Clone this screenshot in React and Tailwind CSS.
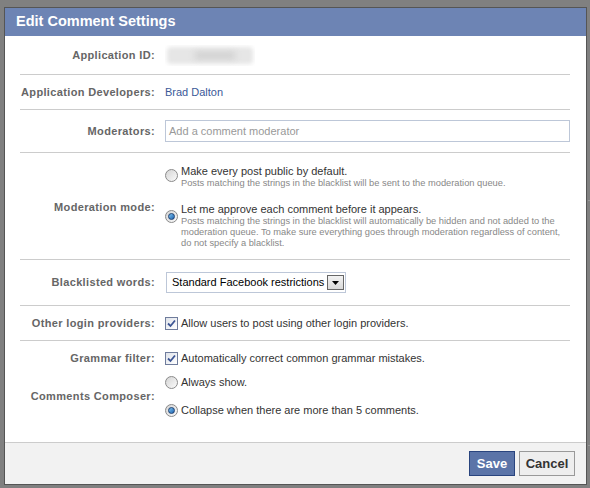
import React from "react";

const font = { fontFamily: '"Liberation Sans", Arial, sans-serif' };

function Radio({ checked }) {
  return (
    <span className="relative inline-flex h-[13px] w-[13px] shrink-0 items-center justify-center rounded-full border border-[#8a8a8a] bg-gradient-to-br from-[#d4d4d4] to-[#fbfbfb]">
      {checked && (
        <span className="h-[7px] w-[7px] rounded-full border border-[#1d3f70] bg-gradient-to-br from-[#7cc3f0] to-[#1d63b0]" />
      )}
    </span>
  );
}

function Checkbox() {
  return (
    <span className="inline-flex h-[13px] w-[13px] shrink-0 items-center justify-center border border-[#6f7c9c] bg-gradient-to-br from-[#dfe3ea] to-[#ffffff]">
      <svg width="9" height="9" viewBox="0 0 9 9">
        <path d="M1 4.5 L3.5 7 L8 1.5" fill="none" stroke="#3c5594" strokeWidth="1.8" />
      </svg>
    </span>
  );
}

function Label({ children, className = "" }) {
  return (
    <div className={"w-[135px] shrink-0 whitespace-nowrap text-right text-[11px] font-bold tracking-[0.35px] text-[#666] " + className}>
      {children}
    </div>
  );
}

function Sep() {
  return <div className="h-px bg-[#ccc]" />;
}

export default function App() {
  return (
    <div className="relative h-[488px] w-[590px] overflow-hidden bg-[#808080]" style={font}>
      <div className="absolute left-[588px] top-[200px] h-px w-[4px] bg-[#999]" />
      <div className="absolute left-[588px] top-[445px] h-px w-[4px] bg-[#999]" />
      <div className="pl-[4px] pt-[7px]">
        <div className="flex h-[478px] w-[583px] flex-col border border-[#555] bg-white">
          <div className="flex h-[28px] items-center bg-[#6d84b4] pl-[11px] text-[14.5px] font-bold text-white">
            Edit Comment Settings
          </div>
          <div className="flex-1 pl-[15px] pr-[16px]">
            <div className="flex h-[38px] items-center gap-[10px]">
              <Label>Application ID:</Label>
              <div className="relative h-[21px] w-[90px] overflow-hidden">
                <div className="absolute inset-[2px] rounded bg-[#e6e6e6] blur-[2px]" />
                <div className="absolute left-[30px] top-[7px] h-[7px] w-[40px] bg-[#d0d0d0] blur-[3px]" />
              </div>
            </div>
            <Sep />
            <div className="flex h-[34px] items-center gap-[10px]">
              <Label>Application Developers:</Label>
              <div className="text-[11px] text-[#3b5998]">Brad Dalton</div>
            </div>
            <Sep />
            <div className="flex h-[42px] items-center gap-[10px]">
              <Label>Moderators:</Label>
              <div className="flex h-[22px] flex-1 items-center border border-[#bdc7d8] px-[3px] text-[11px] text-[#999]">
                Add a comment moderator
              </div>
            </div>
            <Sep />
            <div className="flex h-[106px] items-center gap-[10px]">
              <Label className="mt-[2px]">Moderation mode:</Label>
              <div className="flex flex-1 flex-col gap-[13px] pt-[1px]">
                <div className="flex gap-[3px]">
                  <div className="pt-[1px]"><Radio /></div>
                  <div>
                    <div className="text-[11px] leading-[14px] text-[#333]">Make every post public by default.</div>
                    <div className="text-[9.3px] leading-[11px] text-[#888]">
                      Posts matching the strings in the blacklist will be sent to the moderation queue.
                    </div>
                  </div>
                </div>
                <div className="flex gap-[3px]">
                  <div className="pt-[1px]"><Radio checked /></div>
                  <div>
                    <div className="text-[11px] leading-[14px] text-[#333]">Let me approve each comment before it appears.</div>
                    <div className="w-[385px] text-[9.3px] leading-[11px] text-[#888]">
                      Posts matching the strings in the blacklist will automatically be hidden and not added to the moderation queue. To make sure everything goes through moderation regardless of content, do not specify a blacklist.
                    </div>
                  </div>
                </div>
              </div>
            </div>
            <Sep />
            <div className="flex h-[45px] items-center gap-[10px]">
              <Label>Blacklisted words:</Label>
              <div className="ml-px flex h-[21px] w-[180px] items-center justify-between border border-[#bdc7d8] pl-[5px] pr-px text-[11px] text-black">
                <span>Standard Facebook restrictions</span>
                <span className="flex h-[15px] w-[17px] items-center justify-center border border-[#666] bg-gradient-to-b from-[#f2f2f2] to-[#d8d8d8]">
                  <svg width="7" height="4" viewBox="0 0 7 4"><path d="M0 0 H7 L3.5 4 Z" fill="#000" /></svg>
                </span>
              </div>
            </div>
            <Sep />
            <div className="flex h-[34px] items-center gap-[10px]">
              <Label>Other login providers:</Label>
              <div className="flex items-center gap-[3px] text-[11px] text-[#333]">
                <Checkbox />
                <span>Allow users to post using other login providers.</span>
              </div>
            </div>
            <Sep />
            <div className="flex flex-col pt-[10px]">
              <div className="flex h-[14px] items-center gap-[10px]">
                <Label>Grammar filter:</Label>
                <div className="flex items-center gap-[3px] text-[11px] text-[#333]">
                  <Checkbox />
                  <span>Automatically correct common grammar mistakes.</span>
                </div>
              </div>
              <div className="mt-[10px] flex items-center gap-[10px]">
                <Label>Comments Composer:</Label>
                <div className="flex flex-col gap-[14px]">
                  <div className="flex h-[14px] items-center gap-[3px] text-[11px] text-[#333]">
                    <Radio />
                    <span>Always show.</span>
                  </div>
                  <div className="flex h-[14px] items-center gap-[3px] text-[11px] text-[#333]">
                    <Radio checked />
                    <span>Collapse when there are more than 5 comments.</span>
                  </div>
                </div>
              </div>
            </div>
          </div>
          <div className="flex h-[42px] items-center justify-end gap-[4px] border-t border-[#ccc] bg-[#f2f2f2] pr-[11px]">
            <button className="flex h-[25px] w-[46px] items-center justify-center border border-[#29447e] bg-[#5b74a8] text-[13px] font-bold text-white">
              Save
            </button>
            <button className="flex h-[25px] w-[56px] items-center justify-center border border-[#999] bg-[#eeeeee] text-[13px] font-bold text-[#333]">
              Cancel
            </button>
          </div>
        </div>
      </div>
    </div>
  );
}
